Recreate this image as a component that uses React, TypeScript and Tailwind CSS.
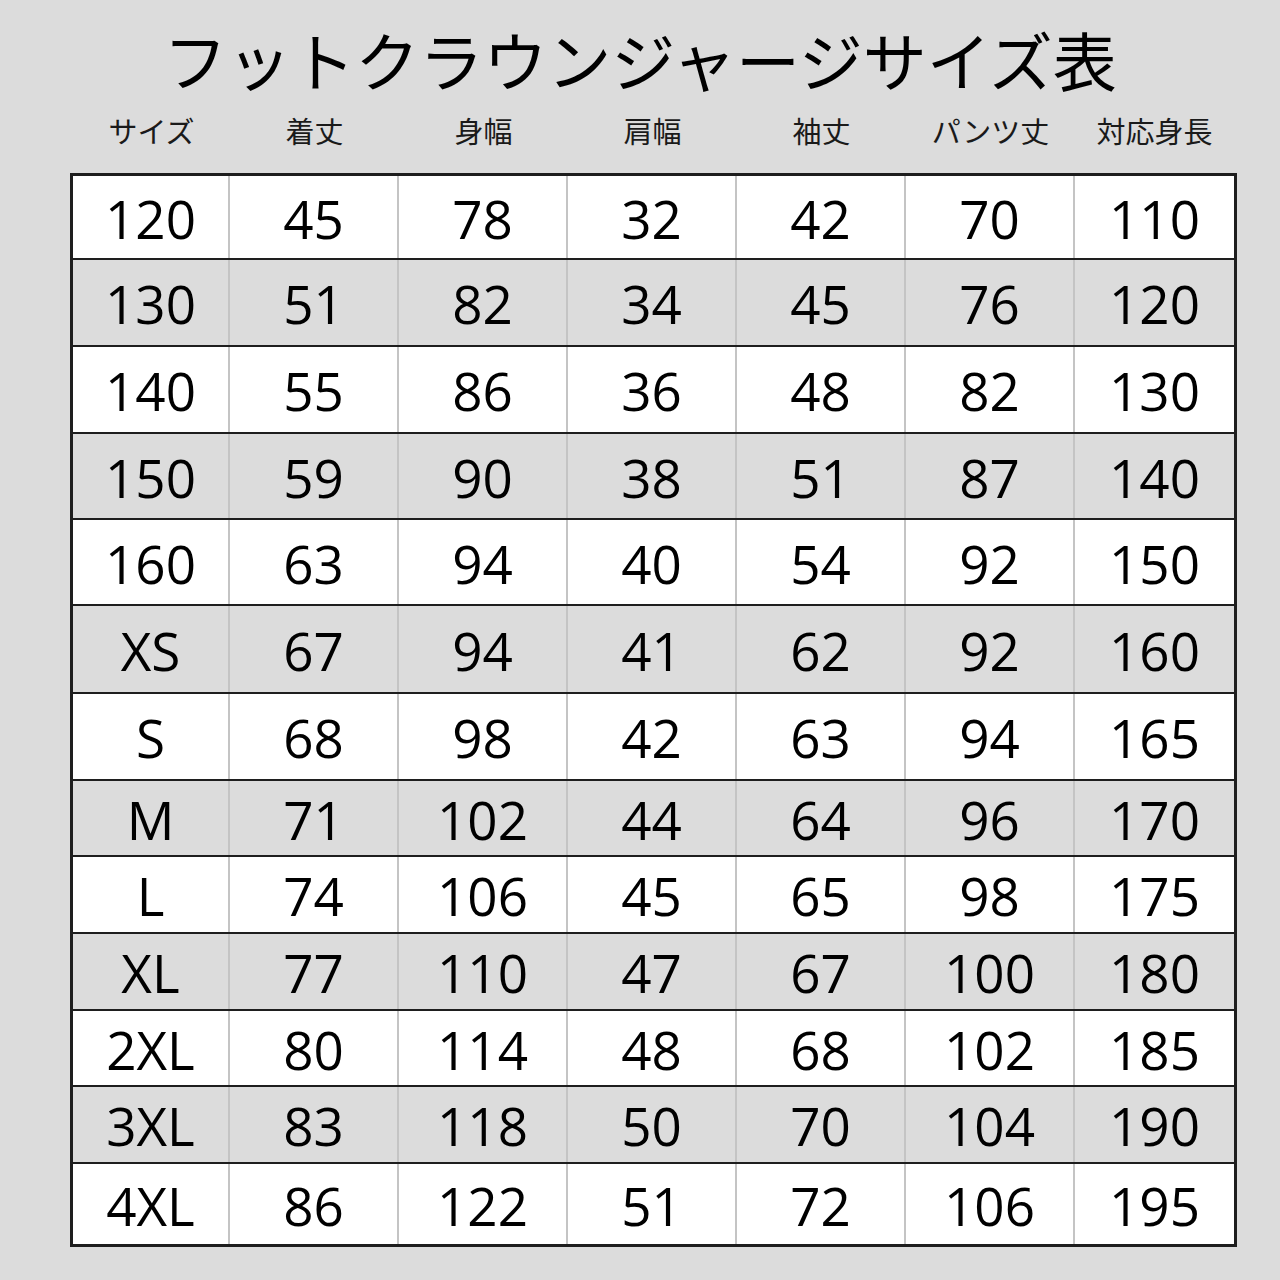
const headers = ["サイズ", "着丈", "身幅", "肩幅", "袖丈", "パンツ丈", "対応身長"];

const rows: { cells: string[]; h: string; gray: boolean }[] = [
  { cells: ["120", "45", "78", "32", "42", "70", "110"], h: "h-[84px]", gray: false },
  { cells: ["130", "51", "82", "34", "45", "76", "120"], h: "h-[87px]", gray: true },
  { cells: ["140", "55", "86", "36", "48", "82", "130"], h: "h-[87px]", gray: false },
  { cells: ["150", "59", "90", "38", "51", "87", "140"], h: "h-[86px]", gray: true },
  { cells: ["160", "63", "94", "40", "54", "92", "150"], h: "h-[86px]", gray: false },
  { cells: ["XS", "67", "94", "41", "62", "92", "160"], h: "h-[88px]", gray: true },
  { cells: ["S", "68", "98", "42", "63", "94", "165"], h: "h-[87px]", gray: false },
  { cells: ["M", "71", "102", "44", "64", "96", "170"], h: "h-[76px]", gray: true },
  { cells: ["L", "74", "106", "45", "65", "98", "175"], h: "h-[77px]", gray: false },
  { cells: ["XL", "77", "110", "47", "67", "100", "180"], h: "h-[77px]", gray: true },
  { cells: ["2XL", "80", "114", "48", "68", "102", "185"], h: "h-[76px]", gray: false },
  { cells: ["3XL", "83", "118", "50", "70", "104", "190"], h: "h-[77px]", gray: true },
  { cells: ["4XL", "86", "122", "51", "72", "106", "195"], h: "h-[80px]", gray: false },
];

const cols = "grid grid-cols-[157px_169px_169px_169px_169px_169px_159px]";

export default function App() {
  return (
    <div
      className="w-[1280px] h-[1280px] bg-[#dcdcdc] text-black"
      style={{ fontFamily: '"Noto Sans CJK JP", "Noto Sans", sans-serif' }}
    >
      {/* Title */}
      <div className="h-[112px] pt-[4px] flex items-center justify-center">
        <h1 className="text-[64px] leading-none font-normal">フットクラウンジャージサイズ表</h1>
      </div>

      {/* Column labels */}
      <div className={`${cols} ml-[73px] h-[36px] items-center`}>
        {headers.map((h) => (
          <div key={h} className="text-center text-[29px] leading-none text-[#1a1a1a]">
            {h}
          </div>
        ))}
      </div>

      {/* Table */}
      <div className="ml-[70px] mt-[25px] w-[1167px] border-[3px] border-[#1e1e1e] bg-white">
        {rows.map((r, i) => (
          <div
            key={r.cells[0]}
            className={`${cols} ${r.h} ${r.gray ? "bg-[#dcdcdc]" : "bg-white"} ${
              i < rows.length - 1 ? "border-b-2 border-[#1e1e1e]" : ""
            }`}
          >
            {r.cells.map((c, j) => (
              <div
                key={j}
                className={`flex items-center justify-center pt-[2px] font-['Open_Sans',sans-serif] font-normal text-[53px] leading-none ${
                  j < r.cells.length - 1 ? "border-r-2 border-[#c4c4c4]" : ""
                }`}
              >
                {c}
              </div>
            ))}
          </div>
        ))}
      </div>
    </div>
  );
}
